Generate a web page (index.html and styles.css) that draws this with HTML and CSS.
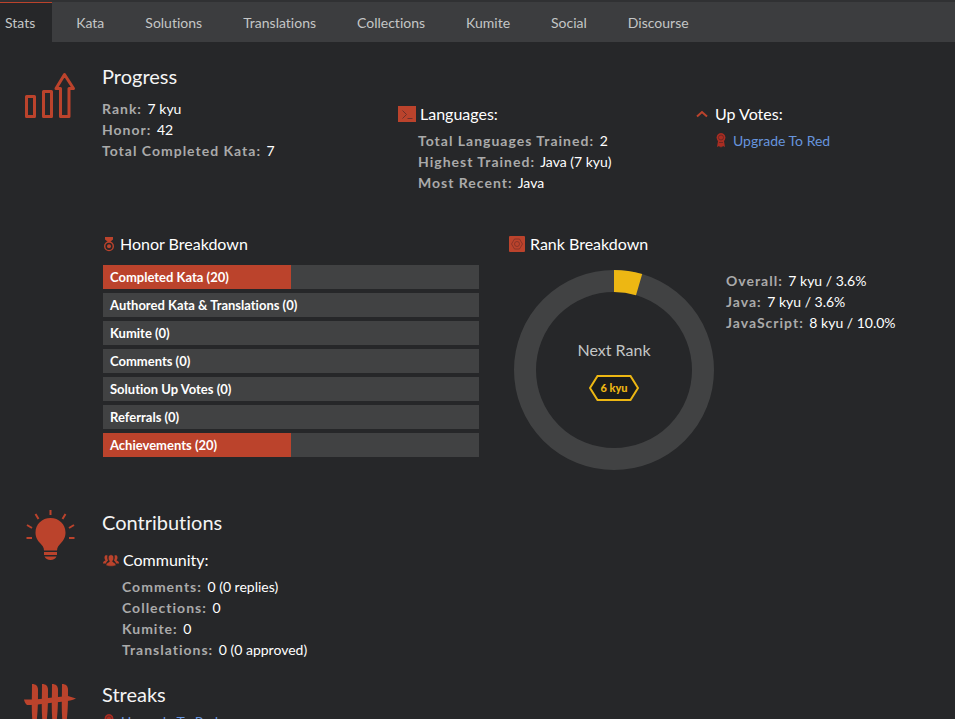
FILE: index.html
```html
<!DOCTYPE html>
<html lang="en">
<head>
<meta charset="utf-8">
<title>Stats</title>
<link rel="stylesheet" href="styles.css">
</head>
<body>
<nav class="tabs">
  <a class="tab active" href="#stats" aria-current="page">Stats</a>
  <a class="tab" href="#kata">Kata</a>
  <a class="tab" href="#solutions">Solutions</a>
  <a class="tab" href="#translations">Translations</a>
  <a class="tab" href="#collections">Collections</a>
  <a class="tab" href="#kumite">Kumite</a>
  <a class="tab" href="#social">Social</a>
  <a class="tab" href="#discourse">Discourse</a>
</nav>
<main>
  <section class="section progress">
    <svg class="section-icon" viewBox="0 0 52 52" fill="none" stroke="currentColor" stroke-width="3" stroke-linejoin="round">
      <path d="M2.500 24.500h8v20h-8zM19.500 19.500h8v25h-8zM36.500 44.500v-28h-4.500L40.500 2.500l9 14h-4.500v28z"/>
    </svg>
    <div class="section-body">
      <div class="summary">
        <div>
          <h2>Progress</h2>
          <div class="stat"><b>Rank:</b> 7 kyu</div>
          <div class="stat"><b>Honor:</b> 42</div>
          <div class="stat"><b>Total Completed Kata:</b> 7</div>
        </div>
        <div class="summary-group">
          <h3><svg class="icon-lang" viewBox="0 0 18 16"><path fill="currentColor" d="M0 0h18v16H0z"/><path fill="none" stroke="#6f302a" stroke-width="1" d="M4.500 4.500l4 4-4 4M9.500 12.500h5"/></svg>Languages:</h3>
          <div class="details">
            <div class="stat"><b>Total Languages Trained:</b> 2</div>
            <div class="stat"><b>Highest Trained:</b> Java (7 kyu)</div>
            <div class="stat"><b>Most Recent:</b> Java</div>
          </div>
        </div>
        <div class="summary-group">
          <h3 class="votes"><svg class="icon-up" viewBox="0 0 12 8" fill="none" stroke="currentColor" stroke-width="2"><path d="M1 6.500L6 2l5 4.500"/></svg>Up Votes:</h3>
          <div class="details">
            <a class="upgrade" href="#upgrade"><svg class="icon-ribbon" viewBox="0 0 10 15"><path fill="#a92d22" d="M5 0l2 .6 1.700 1.400.8 2.500-.7 2.500L8 8l1 6-2-1-1.500 1.500L5 13l-.500 1.500L3 13l-2 1 1-6-.8-1L.5 4.500 1.300 2 3 .6z"/><circle cx="5" cy="4.500" r="2.500" fill="none" stroke="#6f2722"/><path stroke="#6f2722" d="M3 9.500h4"/></svg>Upgrade To Red</a>
          </div>
        </div>
      </div>
      <div class="breakdowns">
        <div>
          <h3><svg class="icon-medal" viewBox="0 0 12 15"><path fill="currentColor" d="M2 0h8v2.500L7 5H5L2 2.500z"/><circle cx="6" cy="9.300" r="4.300" fill="none" stroke="currentColor" stroke-width="1.400"/><circle cx="6" cy="9.300" r="2" fill="currentColor"/></svg>Honor Breakdown</h3>
          <div class="bars">
            <div class="bar"><div class="fill" style="width:50%"></div><span>Completed Kata (20)</span></div>
            <div class="bar"><span>Authored Kata &amp; Translations (0)</span></div>
            <div class="bar"><span>Kumite (0)</span></div>
            <div class="bar"><span>Comments (0)</span></div>
            <div class="bar"><span>Solution Up Votes (0)</span></div>
            <div class="bar"><span>Referrals (0)</span></div>
            <div class="bar"><div class="fill" style="width:50%"></div><span>Achievements (20)</span></div>
          </div>
        </div>
        <div>
          <h3><svg class="icon-rank" viewBox="0 0 16 16"><rect width="16" height="16" rx="1" fill="currentColor"/><g fill="none" stroke="#7d3027" stroke-width=".8"><path d="M5.500 3h5l3 5-3 5h-5l-3-5z"/><circle cx="8" cy="8" r="2.500"/></g></svg>Rank Breakdown</h3>
          <div class="rank">
            <div class="donut">
              <svg class="ring" viewBox="0 0 200 200"><circle cx="100" cy="100" r="89" fill="none" stroke="#414243" stroke-width="22"/><path fill="#edb713" d="M100 0A100 100 0 0 1 128.200 4.100L122 25.200A78 78 0 0 0 100 22z"/></svg>
              <div class="next">Next Rank
                <span class="badge"><svg viewBox="0 0 50 26"><path d="M8.500 1h33L49 13l-7.500 12h-33L1 13z" fill="#1b1c1c" stroke="#edb713" stroke-width="2"/></svg><span>6 kyu</span></span>
              </div>
            </div>
            <div class="rank-list">
              <div class="stat"><b>Overall:</b> 7 kyu / 3.6%</div>
              <div class="stat"><b>Java:</b> 7 kyu / 3.6%</div>
              <div class="stat"><b>JavaScript:</b> 8 kyu / 10.0%</div>
            </div>
          </div>
        </div>
      </div>
    </div>
  </section>
  <section class="section contributions">
    <svg class="section-icon" viewBox="0 0 52 52">
      <path fill="currentColor" d="M26.500 9c8.500 0 15 6.300 15 14.500 0 5-2 7.700-4.500 10.500-2 2.300-4 4.200-4 7.500H20c0-3.300-2-5.200-4-7.500-2.500-2.800-4.500-5.500-4.500-10.500C11.500 15.300 18 9 26.500 9zM20 43h13v3H20zM20.500 47.500h12c-1 2-3 3.500-6 3.500s-5-1.500-6-3.500z"/>
      <path fill="none" stroke="currentColor" stroke-width="2" d="M26.500 1v5M11.500 5l3 5M41.500 5l-3 5M3 16l5 3M50 16l-5 3M2.500 29H8M50.500 29H45"/>
    </svg>
    <div class="section-body">
      <h2>Contributions</h2>
      <h3><svg class="icon-people" viewBox="0 0 16 13" fill="currentColor"><path d="M1.500 3.500C1.500 1.300 3 1 4.500 1.500 4 3 4.300 5 5 6.500c-1 1-2 2-2 3H0C0 8 .5 7.300 2.500 6.500 2 5.500 1.500 5 1.500 3.500zM14.500 3.500c0-2.200-1.500-2.500-3-2 .5 1.500.2 3.500-.5 5 1 1 2 2 2 3h3c0-1.500-.5-2.200-2.500-3 .5-1 1-1.500 1-3z"/><path d="M5.300 4C5.300 1.500 6.500.8 8 .8s2.700.7 2.700 3.200c0 1.500-.5 2.300-1.200 3.200.2 1.300 3.500 1.300 3.500 4C11.500 12.600 4.500 12.600 3 11.200c0-2.700 3.300-2.700 3.500-4C5.800 6.300 5.300 5.500 5.300 4z" stroke="#262729" stroke-width=".5"/></svg>Community:</h3>
      <div class="details">
        <div class="stat"><b>Comments:</b> 0 (0 replies)</div>
        <div class="stat"><b>Collections:</b> 0</div>
        <div class="stat"><b>Kumite:</b> 0</div>
        <div class="stat"><b>Translations:</b> 0 (0 approved)</div>
      </div>
    </div>
  </section>
  <section class="section streaks">
    <svg class="section-icon" viewBox="0 0 52 52" fill="currentColor">
      <path d="M8 3c4 0 6 2 6 6 0 14 0 22-2 36H9C7 31 8 17 8 3zM18 3c4 0 6 2 6 6 0 14 0 22-2 36h-3c-2-14-1-28-1-42zM28 3c4 0 6 2 6 6 0 14 0 22-2 36h-3c-2-14-1-28-1-42zM38 3c4 0 6 2 6 6 0 14 0 22-2 36h-3c-2-14-1-28-1-42z"/>
      <path d="M0 18.500C14 19 30 16 44 15l8 2.500c-8 3.500-15 3-22 4-9 1-18 3-27 2.500C1.500 23 .5 21 0 18.500z"/>
    </svg>
    <div class="section-body">
      <h2>Streaks</h2>
      <a class="upgrade" href="#upgrade"><svg class="icon-ribbon" viewBox="0 0 10 15"><path fill="#a92d22" d="M5 0l2 .6 1.700 1.400.8 2.500-.7 2.500L8 8l1 6-2-1-1.500 1.500L5 13l-.500 1.500L3 13l-2 1 1-6-.8-1L.5 4.500 1.300 2 3 .6z"/><circle cx="5" cy="4.500" r="2.500" fill="none" stroke="#6f2722"/></svg>Upgrade To Red</a>
    </div>
  </section>
</main>
</body>
</html>
```
FILE: styles.css
```css
* { box-sizing: border-box; }
html { height: 100%; overflow: hidden; background: #262729; }
body {
  height: 100%;
  margin: 0;
  overflow: hidden;
  background: #262729;
  color: #fff;
  font: 14px/21px Lato, sans-serif;
  font-variant-ligatures: none;
}
svg { display: block; flex: none; }
a { text-decoration: none; }
h2, h3 { margin: 0; font-weight: 400; }
h2 { font-size: 20px; line-height: 30px; color: #f4f4f4; }
h3 { display: flex; align-items: center; font-size: 16px; line-height: 24px; }

.tabs {
  display: flex;
  gap: 8px;
  border-top: 2px solid #303133;
  background: #3c3d3f;
}
.tab {
  padding: 0 17px 0 16px;
  border-top: 1px solid transparent;
  line-height: 39px;
  color: #c4c6c6;
}
.tab.active {
  padding: 0 17px 0 5px;
  border-top-color: #bb432c;
  background: #262729;
}

.section { display: flex; padding-left: 24px; color: #bb432c; }
.section-icon { width: 52px; height: 52px; margin: 2px 26px 0 0; }
.section-body { flex: 1; min-width: 0; color: #fff; }
.progress { padding-top: 19px; }
.progress > .section-icon { margin-top: 11px; }
.contributions { padding-top: 37px; }
.streaks { padding-top: 19px; }
.contributions h3 { margin-top: 11px; }
h3 svg, .upgrade svg { color: #bb432c; }

.stat b { margin-right: 2px; color: #aaa; font-weight: 700; letter-spacing: 1px; }
.details { padding: 4px 0 0 20px; }
.summary { display: grid; grid-template-columns: 296fr 298fr 259fr; }
.summary h2 { margin-bottom: 7px; }
.summary-group { padding-top: 41px; }
.icon-lang { width: 18px; height: 16px; margin-right: 4px; }
.icon-up { width: 12px; height: 8px; margin-right: 7px; }
.upgrade { display: flex; align-items: center; color: #6795de; }
.streaks .upgrade { padding: 2px; }
.icon-ribbon { width: 10px; height: 15px; margin-right: 7px; }

.breakdowns {
  display: grid;
  grid-template-columns: 377fr 447fr;
  gap: 29px;
  margin-top: 39px;
}
.icon-medal { width: 12px; height: 15px; margin: 0 5px 0 1px; }
.icon-rank { width: 16px; height: 16px; margin: 0 5px 0 1px; }
.icon-people { width: 16px; height: 13px; margin: 0 4px 0 1px; }
.bars { display: grid; gap: 4px; margin: 9px 0 0 1px; }
.bar { display: grid; height: 24px; background: #414243; }
.bar > * { grid-area: 1 / 1; }
.bar span {
  padding-left: 7px;
  font-size: 13px;
  line-height: 24px;
  font-weight: 700;
}
.fill { background: #bb432c; }

.rank { display: flex; gap: 12px; margin: 14px 0 0 6px; }
.donut { display: grid; width: 200px; height: 200px; }
.donut > * { grid-area: 1 / 1; }
.next {
  display: flex;
  flex-direction: column;
  align-items: center;
  gap: 15px;
  padding-top: 69px;
  color: #c4c6c6;
  font-size: 16px;
}
.badge { display: grid; place-items: center; width: 50px; height: 26px; }
.badge > * { grid-area: 1 / 1; }
.badge span { color: #edb713; font-size: 11px; font-weight: 900; line-height: 26px; }
```
